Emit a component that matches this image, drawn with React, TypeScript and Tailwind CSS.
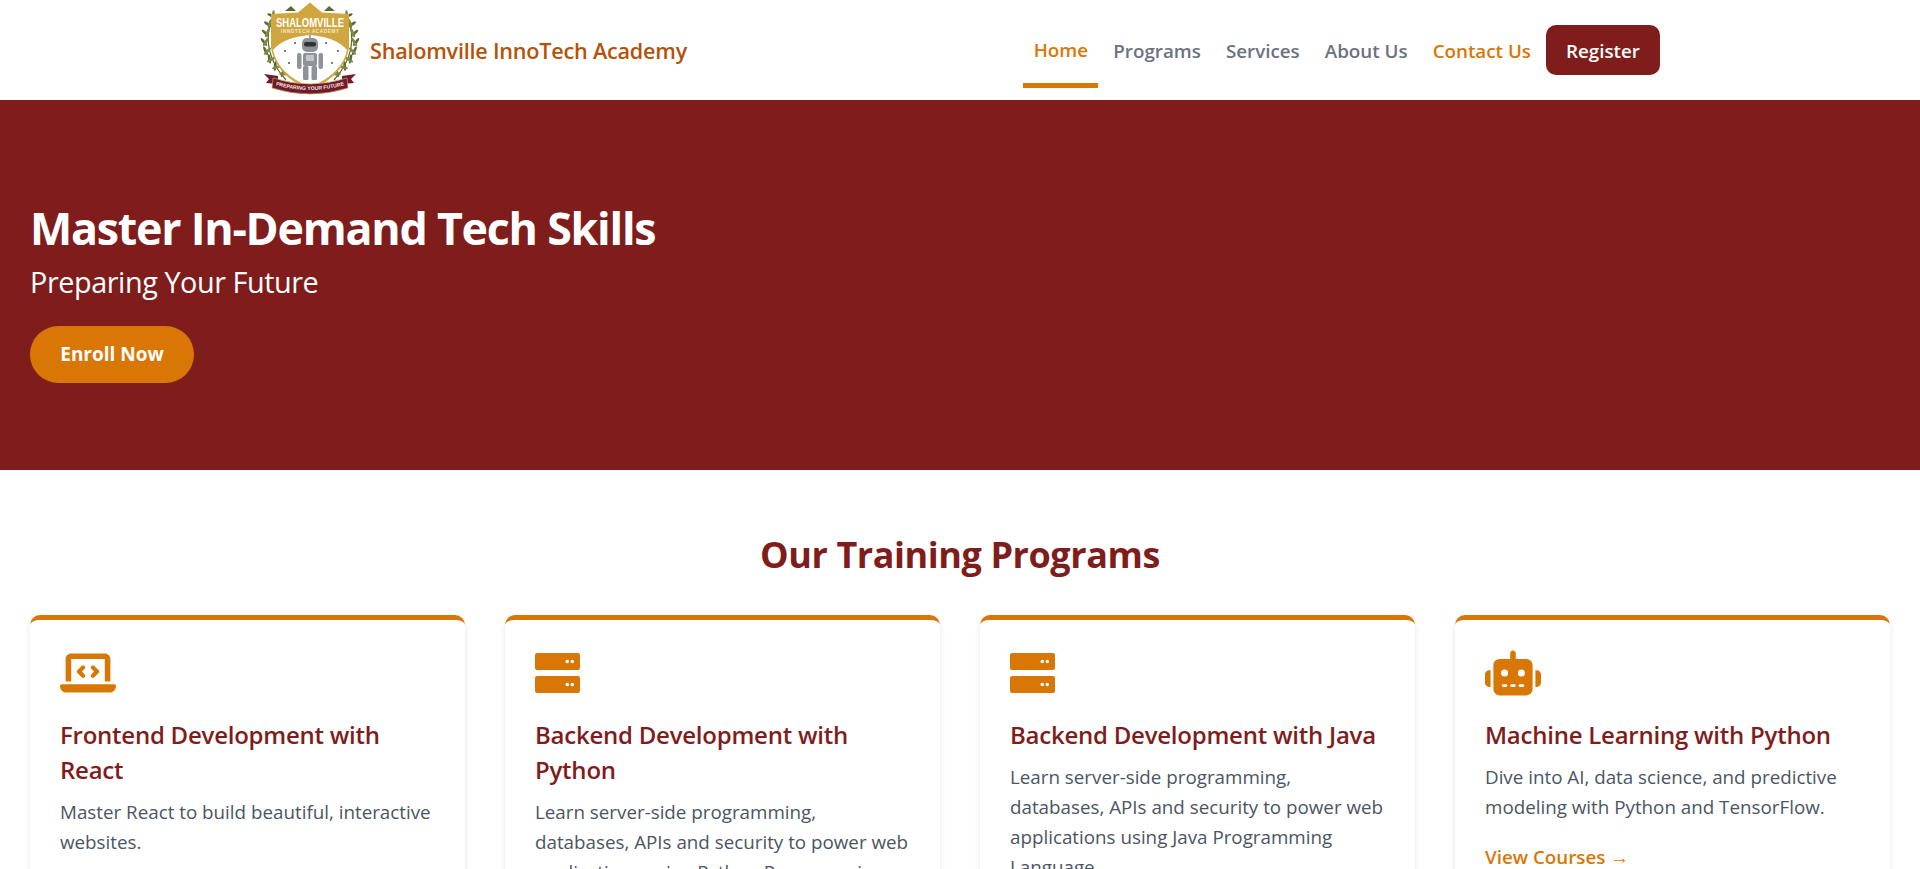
import { FaLaptopCode, FaRobot } from 'react-icons/fa6'

function ServerIcon() {
  return (
    <svg width="45" height="40" viewBox="0 0 45 40" fill="currentColor">
      <path fillRule="evenodd" d="M2 0h41a2 2 0 0 1 2 2v13a2 2 0 0 1-2 2H2a2 2 0 0 1-2-2V2a2 2 0 0 1 2-2Zm28.5 8.5a1.8 1.8 0 1 0 3.6 0 1.8 1.8 0 1 0-3.6 0Zm5 0a1.8 1.8 0 1 0 3.6 0 1.8 1.8 0 1 0-3.6 0Z" />
      <path fillRule="evenodd" d="M2 23h41a2 2 0 0 1 2 2v13a2 2 0 0 1-2 2H2a2 2 0 0 1-2-2V25a2 2 0 0 1 2-2Zm28.5 8.5a1.8 1.8 0 1 0 3.6 0 1.8 1.8 0 1 0-3.6 0Zm5 0a1.8 1.8 0 1 0 3.6 0 1.8 1.8 0 1 0-3.6 0Z" />
    </svg>
  )
}

const programs = [
  {
    icon: <FaLaptopCode size={56} />,
    title: 'Frontend Development with React',
    text: 'Master React to build beautiful, interactive websites.',
  },
  {
    icon: <ServerIcon />,
    title: 'Backend Development with Python',
    text: 'Learn server-side programming, databases, APIs and security to power web applications using Python Programming Language.',
  },
  {
    icon: <ServerIcon />,
    title: 'Backend Development with Java',
    text: 'Learn server-side programming, databases, APIs and security to power web applications using Java Programming Language.',
  },
  {
    icon: <FaRobot size={56} />,
    title: 'Machine Learning with Python',
    text: 'Dive into AI, data science, and predictive modeling with Python and TensorFlow.',
  },
]

const leaves = [
  [18, 18, -30],
  [14, 27, -20],
  [11, 36, -12],
  [9, 45, -3],
  [10, 54, 10],
  [13, 62, 25],
  [18, 69, 40],
  [25, 75, 55],
]

function Logo() {
  return (
    <svg viewBox="4 0 110 100" className="h-[100px] w-[110px] shrink-0">
      <defs>
        <path id="ribbon-line" d="M19 85 Q54 95 89 85" />
      </defs>
      {/* laurels */}
      {[1, -1].map((side) => (
        <g key={side} transform={side === 1 ? undefined : 'translate(108 0) scale(-1 1)'}>
          <path d="M17 16 Q3 50 30 80" fill="none" stroke="#5b6b2e" strokeWidth="1.2" />
          {leaves.map(([x, y, r], i) => (
            <g key={i} transform={`translate(${x} ${y}) rotate(${r})`}>
              <ellipse cx="-3" cy="-1" rx="4.8" ry="1.4" fill="#5b6b2e" transform="rotate(55)" />
              <ellipse cx="3" cy="-1" rx="4.8" ry="1.4" fill="#7c8a45" transform="rotate(-55)" />
            </g>
          ))}
        </g>
      ))}
      <path d="M29 11 L35 6 L40 11 Z M79 11 L73 6 L68 11 Z" fill="#5b6b2e" />
      {/* shield */}
      <path d="M54 2.5 L66 12.5 L93 14 L93 48 Q88 76 54 90 Q20 76 15 48 L15 14 L42 12.5 Z" fill="#cfa640" />
      <path d="M17 50 Q28 37 54 35 Q80 37 91 50 Q86 74 54 87 Q22 74 17 50 Z" fill="#ffffff" />
      <text x="54" y="26.5" textAnchor="middle" fill="#ffffff" fontSize="13" fontWeight="700" fontFamily="'Liberation Sans', sans-serif" textLength="68" lengthAdjust="spacingAndGlyphs">
        SHALOMVILLE
      </text>
      <text x="54" y="33" textAnchor="middle" fill="#f5ecd0" fontSize="4.6" fontWeight="700" fontFamily="'Liberation Sans', sans-serif" textLength="58">
        INNOTECH ACADEMY
      </text>
      {/* stars */}
      {[[39, 43], [70, 43], [29, 51], [82, 51], [33, 63], [76, 63]].map(([x, y]) => (
        <circle key={`${x}-${y}`} cx={x} cy={y} r="1" fill="#555" />
      ))}
      {/* robot */}
      <g fill="#8d9396">
        <rect x="53.2" y="35" width="1.6" height="4" />
        <rect x="46" y="38" width="16" height="14" rx="5" />
        <rect x="47" y="53" width="14" height="13" rx="2" />
        <rect x="41" y="53" width="4.5" height="16" rx="2" />
        <rect x="62.5" y="53" width="4.5" height="16" rx="2" />
        <rect x="47" y="66" width="5.5" height="14" rx="1.5" />
        <rect x="55.5" y="66" width="5.5" height="14" rx="1.5" />
      </g>
      <rect x="48" y="42" width="12" height="4.5" rx="2" fill="#2f3437" />
      <rect x="50" y="55" width="8" height="6" rx="1" fill="#c3c7c9" />
      {/* ribbon */}
      <path d="M8 74 L22 76 L22 84 L10 83 L13 79 Z M100 74 L86 76 L86 84 L98 83 L95 79 Z" fill="#6e1a33" />
      <path d="M17 78 Q54 90 91 78 L92 88 Q54 100 16 88 Z" fill="#6e1a33" stroke="#cfa640" strokeWidth="0.7" />
      <text fill="#f5ecd0" fontSize="5.2" fontWeight="700" fontFamily="'Liberation Sans', sans-serif" textAnchor="middle">
        <textPath href="#ribbon-line" startOffset="50%">PREPARING YOUR FUTURE</textPath>
      </text>
    </svg>
  )
}

function Header() {
  return (
    <header className="h-[100px] bg-white">
      <div className="mx-auto flex h-full w-[1400px] items-center justify-between">
        <div className="flex items-center">
          <Logo />
          <span className="pt-[3px] text-[21.6px] font-semibold tracking-[-0.01em] text-[#b45309]">Shalomville InnoTech Academy</span>
        </div>
        <nav className="flex h-full items-center text-[18.8px] font-semibold text-[#6b7280]">
          <a className="mr-[15px] flex h-[76px] w-[75px] items-center justify-center border-b-[5px] border-[#d97706] pt-[5px] text-[#d97706]">Home</a>
          <a className="mr-[25px] pt-[3px]">Programs</a>
          <a className="mr-[25px] pt-[3px]">Services</a>
          <a className="mr-[25px] pt-[3px]">About Us</a>
          <a className="mr-[15px] pt-[3px] text-[#d97706]">Contact Us</a>
          <a className="flex h-[50px] w-[114px] items-center justify-center rounded-[10px] bg-[#7f1d1d] pt-[2px] text-white">Register</a>
        </nav>
      </div>
    </header>
  )
}

function Hero() {
  return (
    <section className="flex h-[370px] flex-col items-start bg-[#7f1d1d] px-[30px] pt-[98px] text-white">
      <h1 className="text-[44.8px] leading-[60px] font-bold tracking-[-0.028em]">Master In-Demand Tech Skills</h1>
      <p className="text-[28.8px] leading-[48px] tracking-[-0.015em]">Preparing Your Future</p>
      <a className="mt-[20px] flex h-[57px] w-[164px] items-center justify-center rounded-full bg-[#d97706] text-[19px] font-bold">Enroll Now</a>
    </section>
  )
}

function Programs() {
  return (
    <section className="bg-white px-[30px] pt-[60px]">
      <h2 className="mb-[35px] text-center text-[36px] leading-[50px] font-bold tracking-[-0.012em] text-[#7f1d1d]">Our Training Programs</h2>
      <div className="grid grid-cols-4 gap-[40px]">
        {programs.map((p) => (
          <article key={p.title} className="rounded-[10px] border-t-[5px] border-[#d97706] bg-white p-[30px] shadow-[0_4px_6px_rgba(0,0,0,0.1)]">
            <div className="mb-[22px] flex h-[45px] items-center text-[#d97706]">{p.icon}</div>
            <h3 className="mb-[10px] text-[24px] leading-[35px] font-semibold tracking-[-0.01em] text-[#7f1d1d]">{p.title}</h3>
            <p className="mb-[21px] text-[18.8px] leading-[30px] text-[#4b5563]">{p.text}</p>
            <a className="text-[18.8px] font-semibold text-[#d97706]">View Courses →</a>
          </article>
        ))}
      </div>
    </section>
  )
}

export default function App() {
  return (
    <div className="h-[869px] overflow-hidden bg-white font-['Open_Sans',sans-serif]">
      <Header />
      <Hero />
      <Programs />
    </div>
  )
}
